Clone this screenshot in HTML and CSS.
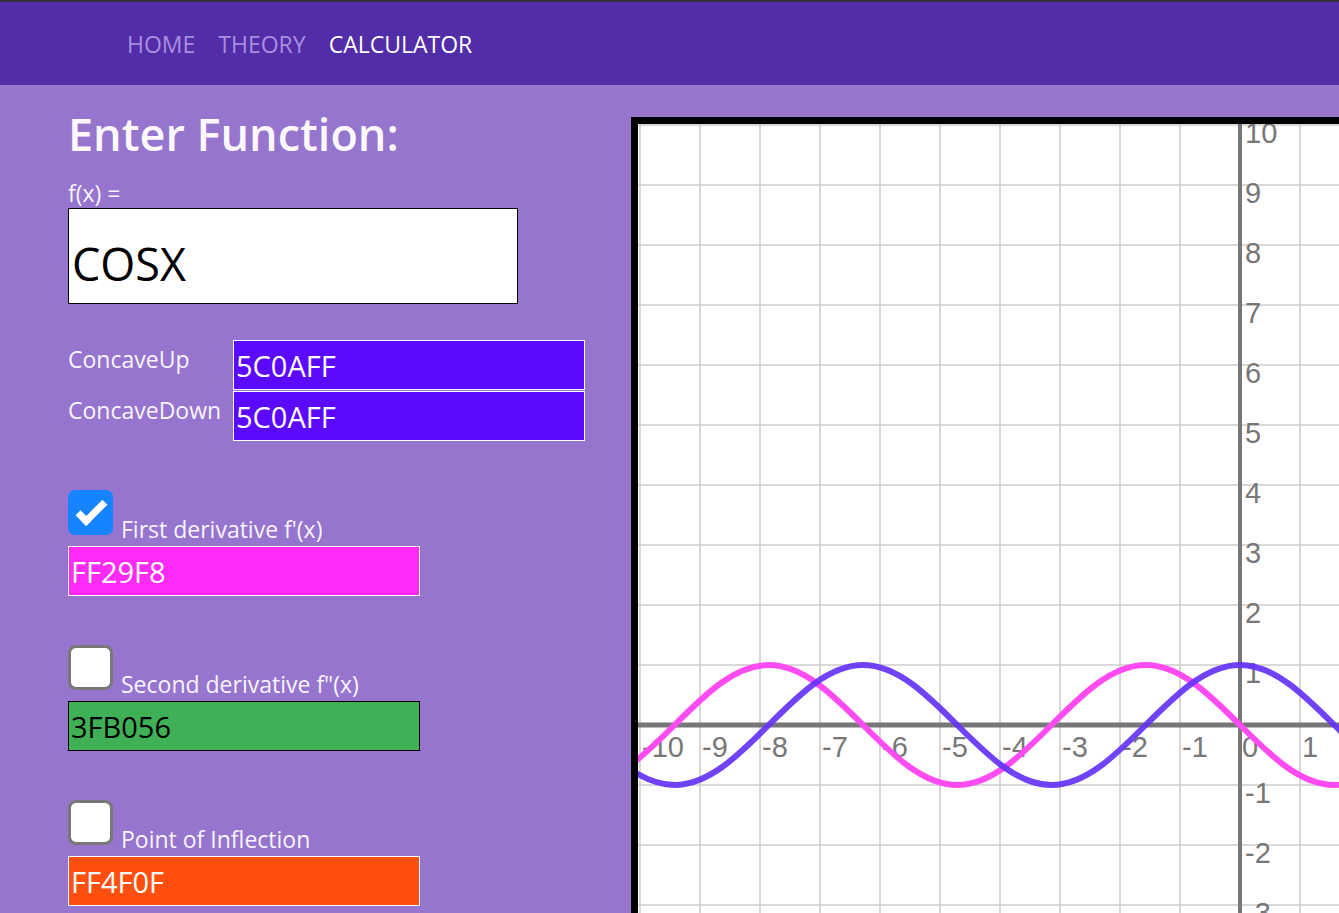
FILE: index.html
```html
<!DOCTYPE html>
<html lang="en">
<head>
<meta charset="utf-8">
<title>Calculator</title>
<link rel="stylesheet" href="styles.css">
</head>
<body>
<nav class="topnav">
  <a class="navlink" href="#">HOME</a>
  <a class="navlink" href="#">THEORY</a>
  <a class="navlink active" href="#">CALCULATOR</a>
</nav>
<main class="main">
  <section class="controls">
    <h1 class="title">Enter Function:</h1>
    <label class="fx-label" for="fx">f(x) =</label>
    <input id="fx" class="fx-input" type="text" value="COSX">

    <div class="concave">
      <label class="concave-label" for="cu">ConcaveUp</label>
      <input id="cu" class="color-input c-purple" type="text" value="5C0AFF">
      <label class="concave-label" for="cd">ConcaveDown</label>
      <input id="cd" class="color-input c-purple" type="text" value="5C0AFF">
    </div>

    <div class="opt">
      <label class="check-line"><input class="check" type="checkbox" checked><span class="check-text">First derivative f'(x)</span></label>
      <input class="color-input short c-pink" type="text" value="FF29F8">
    </div>
    <div class="opt">
      <label class="check-line"><input class="check" type="checkbox"><span class="check-text">Second derivative f"(x)</span></label>
      <input class="color-input short c-green" type="text" value="3FB056">
    </div>
    <div class="opt">
      <label class="check-line"><input class="check" type="checkbox"><span class="check-text">Point of Inflection</span></label>
      <input class="color-input short c-orange" type="text" value="FF4F0F">
    </div>
  </section>

  <section class="graph-col">
    <div class="graph-frame">
      <svg class="graph" width="720" height="800" viewBox="0 0 720 800" xmlns="http://www.w3.org/2000/svg">
        <defs>
          <pattern id="grid" x="1" y="0" width="60" height="60" patternUnits="userSpaceOnUse">
            <path d="M0 1H60M1 0V60" stroke="#cdcdcd" stroke-width="1.6" fill="none"/>
          </pattern>
        </defs>
        <rect x="0" y="0" width="720" height="800" fill="#fff"/>
        <rect x="0" y="0" width="720" height="800" fill="url(#grid)"/>
        <line x1="602" y1="0" x2="602" y2="800" stroke="#777" stroke-width="4"/>
        <line x1="0" y1="601" x2="720" y2="601" stroke="#777" stroke-width="5"/>
        <g class="ylabels" font-family="Liberation Sans, Arial, sans-serif" font-size="29" fill="#777">
          <text x="607" y="19">10</text>
          <text x="607" y="79">9</text>
          <text x="607" y="139">8</text>
          <text x="607" y="199">7</text>
          <text x="607" y="259">6</text>
          <text x="607" y="319">5</text>
          <text x="607" y="379">4</text>
          <text x="607" y="439">3</text>
          <text x="607" y="499">2</text>
          <text x="607" y="559">1</text>
          <text x="607" y="679">-1</text>
          <text x="607" y="739">-2</text>
          <text x="607" y="799">-3</text>
        </g>
        <g class="xlabels" font-family="Liberation Sans, Arial, sans-serif" font-size="29" fill="#777">
          <text x="4" y="633">-10</text>
          <text x="64" y="633">-9</text>
          <text x="124" y="633">-8</text>
          <text x="184" y="633">-7</text>
          <text x="244" y="633">-6</text>
          <text x="304" y="633">-5</text>
          <text x="364" y="633">-4</text>
          <text x="424" y="633">-3</text>
          <text x="484" y="633">-2</text>
          <text x="544" y="633">-1</text>
          <text x="604" y="633">0</text>
          <text x="664" y="633">1</text>
        </g>
        <path d="M-151.98 601 c30.737,30.737 60.139,60 94.248,60 c34.109,0 63.511,-29.263 94.248,-60 c30.737,-30.737 60.139,-60 94.248,-60 c34.109,0 63.511,29.263 94.248,60 c30.737,30.737 60.139,60 94.248,60 c34.109,0 63.511,-29.263 94.248,-60 c30.737,-30.737 60.139,-60 94.248,-60 c34.109,0 63.511,29.263 94.248,60 c30.737,30.737 60.139,60 94.248,60 c34.109,0 63.511,-29.263 94.248,-60 c30.737,-30.737 60.139,-60 94.248,-60" fill="none" stroke="#ff4cf2" stroke-width="6" stroke-linecap="round"/>
        <path d="M-57.73 601 c30.737,30.737 60.139,60 94.248,60 c34.109,0 63.511,-29.263 94.248,-60 c30.737,-30.737 60.139,-60 94.248,-60 c34.109,0 63.511,29.263 94.248,60 c30.737,30.737 60.139,60 94.248,60 c34.109,0 63.511,-29.263 94.248,-60 c30.737,-30.737 60.139,-60 94.248,-60 c34.109,0 63.511,29.263 94.248,60 c30.737,30.737 60.139,60 94.248,60 c34.109,0 63.511,-29.263 94.248,-60" fill="none" stroke="#6433f7" stroke-width="6" stroke-linecap="round" stroke-opacity="0.92"/>
      </svg>
    </div>
  </section>
</main>
</body>
</html>
```
FILE: styles.css
```css
html, body {
  margin: 0;
  padding: 0;
  overflow: hidden;
}
body {
  background: #9575cd;
  font-family: "Open Sans", "Noto Sans", sans-serif;
  color: #f8f4ff;
  height: 913px;
}
.topnav {
  box-sizing: border-box;
  height: 85px;
  border-top: 2px solid #34313d;
  background: #512da8;
  display: flex;
  gap: 23px;
  padding: 27px 0 0 127px;
}
.navlink {
  font-size: 23px;
  line-height: 30px;
  color: #a98ee0;
  text-decoration: none;
}
.navlink.active {
  color: #ffffff;
}
.main {
  display: flex;
  height: 828px;
}
.controls {
  box-sizing: border-box;
  width: 631px;
  flex: none;
  padding: 26px 0 0 68px;
}
.title {
  margin: 0;
  font-size: 45px;
  line-height: 45px;
  font-weight: 600;
  color: #fdf8fc;
}
.fx-label {
  display: block;
  margin-top: 24px;
  font-size: 23px;
  line-height: 26px;
}
.fx-input {
  display: block;
  box-sizing: border-box;
  margin-top: 2px;
  width: 450px;
  height: 96px;
  border: 1px solid #000;
  background: #fff;
  color: #000;
  font-family: "Open Sans", "Noto Sans", sans-serif;
  font-size: 45px;
  padding: 15px 0 0 3px;
  outline: none;
}
.concave {
  margin-top: 36px;
  display: grid;
  grid-template-columns: 165px 352px;
  row-gap: 1px;
}
.concave-label {
  font-size: 23px;
  line-height: 38px;
  align-self: start;
}
.color-input {
  display: block;
  box-sizing: border-box;
  width: 352px;
  height: 50px;
  border: 1px solid #fff;
  padding: 0 0 0 2px;
  font-family: "Open Sans", "Noto Sans", sans-serif;
  font-size: 29px;
  color: #fff;
  outline: none;
}
.c-purple { background: #5c0aff; }
.c-pink { background: #ff29f8; }
.c-green { background: #3fb056; border-color: #000; color: #000; }
.c-orange { background: #ff4f0f; }
.opt {
  margin-top: 49px;
}
.short {
  margin-top: 4px;
}
.check-line {
  display: flex;
  align-items: flex-end;
  height: 52px;
}
.check {
  appearance: none;
  -webkit-appearance: none;
  position: relative;
  box-sizing: border-box;
  width: 45px;
  height: 45px;
  margin: 0 0 7px 0;
  border: 3px solid #787878;
  border-radius: 8px;
  background: #fff;
  flex: none;
}
.check:checked {
  background: #1683ff;
  border-color: #1683ff;
  border-radius: 7px;
}
.check:checked::before {
  content: "";
  position: absolute;
  box-sizing: border-box;
  left: 13px;
  top: 2px;
  width: 15px;
  height: 30px;
  border-right: 7px solid #fff;
  border-bottom: 7px solid #fff;
  transform: rotate(45deg);
}
.check-text {
  margin-left: 8px;
  font-size: 23px;
  line-height: 26px;
}
.graph-col {
  flex: 1;
  min-width: 0;
  overflow: hidden;
}
.graph-frame {
  margin-top: 32px;
  width: 727px;
  border-top: 7px solid #000;
  border-left: 7px solid #000;
  background: #fff;
}
.graph {
  display: block;
}
```
